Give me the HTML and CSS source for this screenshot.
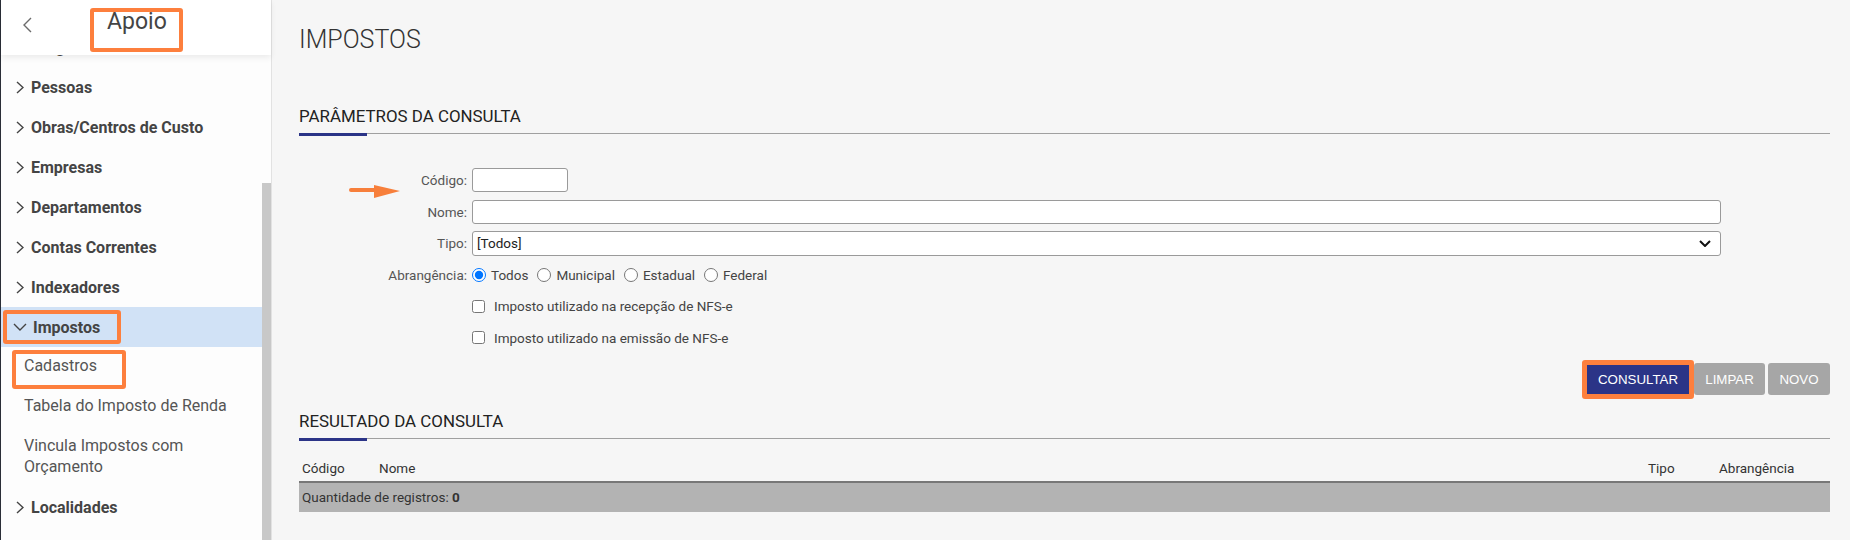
FILE: index.html
```html
<!DOCTYPE html>
<html lang="pt-BR">
<head>
<meta charset="utf-8">
<title>Impostos</title>
<link rel="stylesheet" href="styles.css">
</head>
<body>
<div class="app">
  <aside class="sidebar">
    <div class="side-head">
      <svg class="back" width="10" height="16" viewBox="0 0 10 16"><path d="M9 1 L2 8 L9 15" fill="none" stroke="#6b6b6b" stroke-width="1.4"/></svg>
      <div class="side-title">Apoio</div>
    </div>
    <div class="side-body">
      <div class="list">
        <ul class="menu">
          <li class="item"><svg class="chev" width="8" height="13" viewBox="0 0 8 13"><path d="M1 1 L7 6.5 L1 12" fill="none" stroke="#444" stroke-width="1.4"/></svg>Cargos</li>
          <li class="item"><svg class="chev" width="8" height="13" viewBox="0 0 8 13"><path d="M1 1 L7 6.5 L1 12" fill="none" stroke="#444" stroke-width="1.4"/></svg>Pessoas</li>
          <li class="item"><svg class="chev" width="8" height="13" viewBox="0 0 8 13"><path d="M1 1 L7 6.5 L1 12" fill="none" stroke="#444" stroke-width="1.4"/></svg>Obras/Centros de Custo</li>
          <li class="item"><svg class="chev" width="8" height="13" viewBox="0 0 8 13"><path d="M1 1 L7 6.5 L1 12" fill="none" stroke="#444" stroke-width="1.4"/></svg>Empresas</li>
          <li class="item"><svg class="chev" width="8" height="13" viewBox="0 0 8 13"><path d="M1 1 L7 6.5 L1 12" fill="none" stroke="#444" stroke-width="1.4"/></svg>Departamentos</li>
          <li class="item"><svg class="chev" width="8" height="13" viewBox="0 0 8 13"><path d="M1 1 L7 6.5 L1 12" fill="none" stroke="#444" stroke-width="1.4"/></svg>Contas Correntes</li>
          <li class="item"><svg class="chev" width="8" height="13" viewBox="0 0 8 13"><path d="M1 1 L7 6.5 L1 12" fill="none" stroke="#444" stroke-width="1.4"/></svg>Indexadores</li>
          <li class="item item-open">
            <span class="mark mark-open"><svg class="chev-down" width="14" height="8" viewBox="0 0 14 8"><path d="M1 1 L7 7 L13 1" fill="none" stroke="#444" stroke-width="1.4"/></svg>Impostos</span>
          </li>
          <li class="sub sub-marked"><span class="mark mark-sub">Cadastros</span></li>
          <li class="sub">Tabela do Imposto de Renda</li>
          <li class="sub sub-wrap">Vincula Impostos com<br>Orçamento</li>
          <li class="item"><svg class="chev" width="8" height="13" viewBox="0 0 8 13"><path d="M1 1 L7 6.5 L1 12" fill="none" stroke="#444" stroke-width="1.4"/></svg>Localidades</li>
          <li class="item"><svg class="chev" width="8" height="13" viewBox="0 0 8 13"><path d="M1 1 L7 6.5 L1 12" fill="none" stroke="#444" stroke-width="1.4"/></svg>Unidades</li>
        </ul>
      </div>
      <div class="scroll"></div>
    </div>
  </aside>

  <main class="content">
    <h1 class="page-title">IMPOSTOS</h1>

    <section class="section">
      <h2 class="sec-title">PARÂMETROS DA CONSULTA</h2>
      <div class="sec-rule"><span class="rule-accent"></span><span class="rule-line"></span></div>
    </section>

    <form class="form">
      <svg class="pointer" width="52" height="16" viewBox="0 0 52 16"><path d="M2 6 H27" stroke="#f77f3b" stroke-width="4" stroke-linecap="round"/><polygon points="25,1 51,7 25,14" fill="#f77f3b"/></svg>
      <label class="lbl">Código:</label>
      <div class="ctl"><input class="inp inp-code" type="text"></div>
      <label class="lbl">Nome:</label>
      <div class="ctl"><input class="inp" type="text"></div>
      <label class="lbl">Tipo:</label>
      <div class="ctl">
        <div class="select"><span>[Todos]</span><svg width="12" height="7" viewBox="0 0 12 7"><path d="M1 1 L6 6 L11 1" fill="none" stroke="#111" stroke-width="2"/></svg></div>
      </div>
      <label class="lbl">Abrangência:</label>
      <div class="ctl radios">
        <label class="opt"><input type="radio" name="abr" checked>Todos</label>
        <label class="opt"><input type="radio" name="abr">Municipal</label>
        <label class="opt"><input type="radio" name="abr">Estadual</label>
        <label class="opt"><input type="radio" name="abr">Federal</label>
      </div>
      <span class="lbl"></span>
      <div class="ctl"><label class="chk"><input type="checkbox">Imposto utilizado na recepção de NFS-e</label></div>
      <span class="lbl"></span>
      <div class="ctl"><label class="chk"><input type="checkbox">Imposto utilizado na emissão de NFS-e</label></div>
    </form>

    <div class="actions">
      <span class="mark-btn"><button class="btn btn-primary" type="button">CONSULTAR</button></span>
      <button class="btn btn-gray btn-limpar" type="button">LIMPAR</button>
      <button class="btn btn-gray btn-novo" type="button">NOVO</button>
    </div>

    <section class="section section-result">
      <h2 class="sec-title">RESULTADO DA CONSULTA</h2>
      <div class="sec-rule"><span class="rule-accent"></span><span class="rule-line"></span></div>
    </section>

    <table class="grid">
      <colgroup><col class="c1"><col><col class="c3"><col class="c4"></colgroup>
      <thead>
        <tr><th>Código</th><th>Nome</th><th>Tipo</th><th>Abrangência</th></tr>
      </thead>
      <tbody>
        <tr><td colspan="4">Quantidade de registros: <b>0</b></td></tr>
      </tbody>
    </table>
  </main>
</div>
</body>
</html>
```

FILE: styles.css
```css
* { box-sizing: border-box; }
html, body { margin: 0; padding: 0; }
body {
  width: 1850px;
  height: 540px;
  overflow: hidden;
  font-family: Roboto, "Noto Sans", sans-serif;
  background: #f6f6f6;
}
.app { display: flex; height: 540px; }

/* Sidebar */
.sidebar {
  width: 272px;
  flex: none;
  display: flex;
  flex-direction: column;
  background: #fdfdfd;
  border-left: 1px solid #2a2e37;
  border-right: 1px solid #e2e2e2;
}
.side-head {
  height: 55px;
  flex: none;
  display: flex;
  align-items: flex-start;
  padding-left: 21px;
  background: #fff;
  box-shadow: 0 3px 6px rgba(0,0,0,0.07);
  position: relative;
  z-index: 1;
}
.back { margin-top: 17px; }
.side-title {
  margin-top: 8px;
  margin-left: 58px;
  width: 93px;
  height: 44px;
  border: 4px solid #fd7f3d;
  border-radius: 3px;
  padding-left: 13px;
  font-size: 23px;
  line-height: 20px;
  color: #444;
}
.side-body { flex: 1; display: flex; min-height: 0; }
.list { flex: 1; overflow: hidden; }
.menu { list-style: none; margin: -28px 0 0; padding: 0; }
.item {
  height: 40px;
  display: flex;
  align-items: center;
  padding-left: 15px;
  font-size: 16px;
  font-weight: 700;
  color: #444;
}
.chev { margin-right: 7px; flex: none; }
.item-open { background: #d1e2f6; padding-left: 2px; }
.mark { border: 4px solid #fd7f3d; border-radius: 3px; }
.mark-open {
  width: 118px;
  height: 34px;
  display: flex;
  align-items: center;
  padding-left: 6px;
}
.chev-down { margin-right: 6px; flex: none; }
.sub {
  height: 39px;
  display: flex;
  align-items: center;
  padding-left: 23px;
  font-size: 16px;
  color: #555;
}
.sub-marked { align-items: flex-start; padding-left: 11px; }
.mark-sub {
  display: block;
  margin-top: 3px;
  width: 114px;
  height: 39px;
  padding-left: 8px;
  line-height: 24px;
}
.sub-wrap { height: auto; padding-top: 10px; padding-bottom: 10px; line-height: 21px; }
.scroll { width: 9px; flex: none; margin-top: 128px; background: #c8c8c8; }

/* Content */
.content {
  flex: 1;
  padding: 25px 20px 0 27px;
  color: #333;
}
.page-title {
  margin: 0;
  font-size: 25px;
  font-weight: 300;
  line-height: 30px;
  color: #333;
}
.section { margin-top: 51px; }
.sec-title {
  margin: 0;
  font-size: 16.9px;
  font-weight: 400;
  line-height: 20px;
  color: #222;
}
.sec-rule { display: flex; margin-top: 7px; }
.rule-accent { width: 68px; height: 3px; background: #2b3487; flex: none; }
.rule-line { flex: 1; height: 1px; background: #a0a0a0; }

.form {
  position: relative;
  margin: 32px 109px 0 0;
  display: grid;
  grid-template-columns: 168px 1fr;
  column-gap: 5px;
  row-gap: 7.6px;
  grid-auto-rows: 24px;
  font-size: 13.5px;
}
.pointer { position: absolute; left: 50px; top: 16px; }
.lbl { text-align: right; line-height: 24px; color: #555; }
.ctl { display: flex; align-items: center; color: #444; }
.inp {
  width: 100%;
  height: 24px;
  border: 1px solid #9a9a9a;
  border-radius: 3px;
  background: #fff;
  font: inherit;
}
.inp-code { width: 96px; }
.select {
  width: 100%;
  height: 25px;
  border: 1px solid #9a9a9a;
  border-radius: 3px;
  background: #fff;
  display: flex;
  align-items: center;
  justify-content: space-between;
  padding: 0 9px 0 4px;
  color: #222;
}
.radios { gap: 9px; }
.opt { display: inline-flex; align-items: center; }
.opt input { margin: 0 5px 0 0; width: 14px; height: 14px; }
.chk { display: inline-flex; align-items: center; }
.chk input { margin: 0 9px 0 0; width: 13px; height: 13px; }

.actions {
  display: flex;
  justify-content: flex-end;
  align-items: center;
  margin-top: 10px;
}
.mark-btn {
  display: flex;
  border: 5px solid #fd7f3d;
  border-radius: 3px;
}
.btn {
  font-family: "Liberation Sans", Arial, sans-serif;
  font-size: 13.3px;
  color: #fff;
  border: 0;
  padding: 0;
}
.btn-primary { height: 29px; width: 102px; background: #2b3487; }
.btn-gray { height: 32px; background: #a6a6a6; border-radius: 3px; }
.btn-limpar { width: 71px; }
.btn-novo { width: 62px; margin-left: 3px; }

.section-result { margin-top: 12px; }

.grid {
  width: 100%;
  margin-top: 15px;
  border-collapse: collapse;
  font-size: 13.5px;
  color: #333;
}
.c1 { width: 77px; }
.c3 { width: 71px; }
.c4 { width: 114px; }
.grid th {
  height: 26px;
  padding: 0 3px;
  text-align: left;
  font-weight: 400;
  border-bottom: 2px solid #777;
}
.grid td {
  height: 30px;
  padding: 0 3px;
  background: #b3b3b3;
  color: #333;
}
.grid td b { font-weight: 700; }
```
